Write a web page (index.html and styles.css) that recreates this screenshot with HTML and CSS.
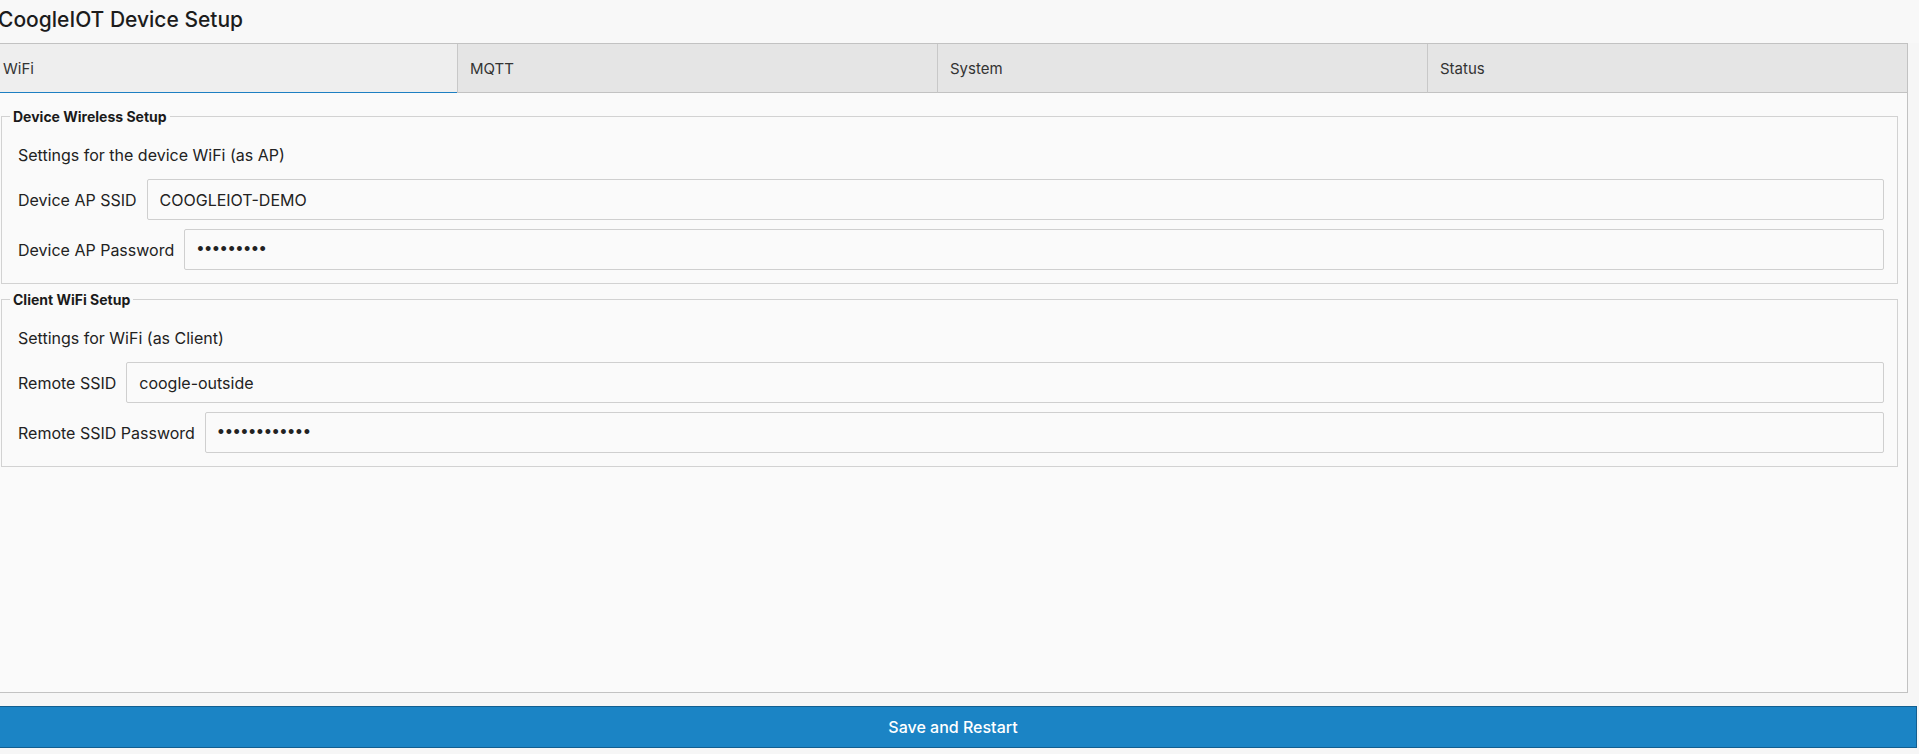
FILE: index.html
```html
<!DOCTYPE html>
<html lang="en">
<head>
    <meta charset="UTF-8">
    <meta name="viewport" content="width=device-width, initial-scale=1.0">
    <title>CoogleIOT Device Setup</title>
    <link rel="stylesheet" href="styles.css">
</head>
<body>

    <div class="page">
        <h1>CoogleIOT Device Setup</h1>

        <div class="tabs">
            <div class="tab active">WiFi</div>
            <div class="tab">MQTT</div>
            <div class="tab">System</div>
            <div class="tab">Status</div>
        </div>

        <div class="panel">
            <fieldset>
                <legend>Device Wireless Setup</legend>
                <p class="desc">Settings for the device WiFi (as AP)</p>
                <div class="row">
                    <label for="ap_ssid">Device AP SSID</label>
                    <input type="text" id="ap_ssid" value="COOGLEIOT-DEMO">
                </div>
                <div class="row">
                    <label for="ap_pass">Device AP Password</label>
                    <input type="password" id="ap_pass" value="123456789">
                </div>
            </fieldset>

            <fieldset>
                <legend>Client WiFi Setup</legend>
                <p class="desc">Settings for WiFi (as Client)</p>
                <div class="row">
                    <label for="remote_ssid">Remote SSID</label>
                    <input type="text" id="remote_ssid" value="coogle-outside">
                </div>
                <div class="row">
                    <label for="remote_pass">Remote SSID Password</label>
                    <input type="password" id="remote_pass" value="123456789012">
                </div>
            </fieldset>
        </div>

        <button class="save">Save and Restart</button>
    </div>

</body>
</html>
```

FILE: styles.css
```css
* {
    box-sizing: border-box;
}

body {
    margin: 0;
    background: #f6f6f6;
    font-family: Inter, Roboto, "Liberation Sans", sans-serif;
    color: #222;
    overflow: hidden;
}

.page {
    margin-left: -10px;
}

h1 {
    margin: 0;
    height: 43px;
    padding: 7px 0 0 8px;
    font-size: 21px;
    line-height: 26px;
    font-weight: 500;
    color: #1c1c1c;
    background: #f8f8f8;
}

.tabs {
    display: grid;
    grid-template-columns: 466px 480px 490px 1fr;
    margin-right: 11px;
    border: 1px solid #c2c2c2;
    border-bottom: none;
    background: #e5e5e5;
}

.tab {
    height: 49px;
    display: flex;
    align-items: center;
    padding: 0 12px;
    font-size: 15px;
    color: #333;
    border-left: 1px solid #c8c8c8;
    border-bottom: 1px solid #c2c2c2;
}

.tab:first-child {
    border-left: none;
}

.tab.active {
    background: #eeeeee;
    border-bottom-color: #1d7fc2;
}

.panel {
    height: 600px;
    margin-right: 11px;
    padding: 16px 9px 0 10px;
    background: #fafafa;
    border: 1px solid #c2c2c2;
    border-top: none;
}

fieldset {
    margin: 0 0 8px;
    padding: 7px 13px 13px 15px;
    border: 1px solid #d2d2d2;
    min-width: 0;
}

legend {
    margin-left: -7px;
    padding: 0 3px;
    font-size: 14px;
    font-weight: bold;
    line-height: 15px;
    color: #1a1a1a;
}

.desc {
    margin: 14px 0 14px 1px;
    font-size: 16px;
    line-height: 20px;
}

.row {
    display: flex;
    align-items: center;
    gap: 10px;
    margin-bottom: 9px;
}

.row:last-child {
    margin-bottom: 0;
}

.row label {
    padding-left: 1px;
    font-size: 16px;
    white-space: nowrap;
}

.row input {
    flex: 1;
    min-width: 0;
    height: 41px;
    padding: 0 12px;
    font-family: Inter, Roboto, "Liberation Sans", sans-serif;
    font-size: 16px;
    color: #222;
    background: #fafafa;
    border: 1px solid #cfcfcf;
    border-radius: 2px;
    outline: none;
}

.row input[type="password"] {
    font-family: "Liberation Sans", sans-serif;
    font-size: 18px;
    letter-spacing: 1.5px;
}

.save {
    display: block;
    width: calc(100% - 2px);
    height: 42px;
    margin-top: 13px;
    background: #1b84c5;
    border: 1px solid #125f91;
    border-left: none;
    color: #fff;
    font-family: Inter, Roboto, "Liberation Sans", sans-serif;
    font-size: 16px;
    font-weight: 500;
    cursor: pointer;
}
```
